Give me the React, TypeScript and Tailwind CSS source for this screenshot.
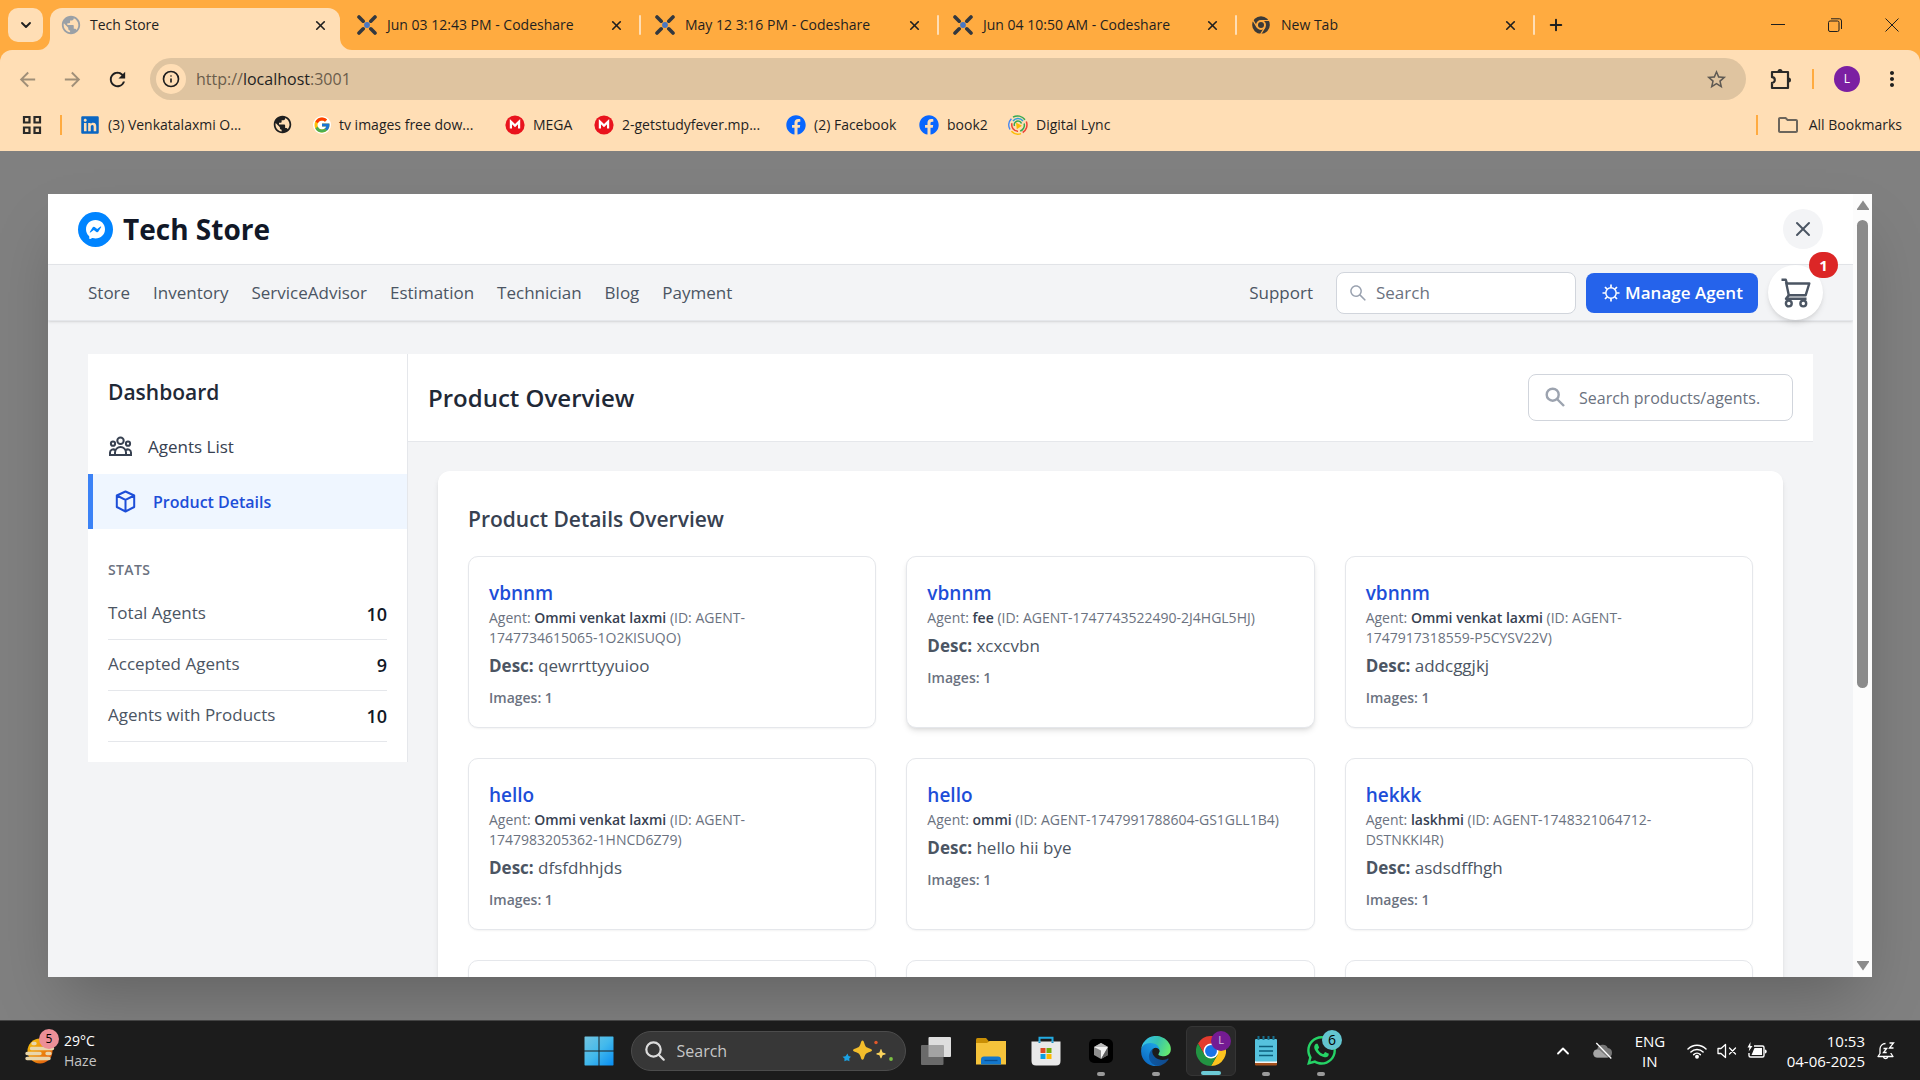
import React from "react";
import { AiOutlineSearch } from "react-icons/ai";
import { BsMessenger } from "react-icons/bs";
import { FaFacebook, FaLinkedin, FaWhatsapp } from "react-icons/fa";
import { FcGoogle } from "react-icons/fc";
import {
  MdArrowBack,
  MdArrowForward,
  MdMoreVert,
  MdOutlineFolder,
  MdPublic,
  MdRefresh,
  MdStarBorder,
} from "react-icons/md";
import { ChevronDown, ChevronUp, Info, Plus, X } from "lucide-react";

/* ---------- drawn icons ---------- */

function CodeshareIcon() {
  return (
    <svg viewBox="0 0 20 20" className="size-5 shrink-0" aria-hidden="true">
      <g stroke="#33383f" strokeWidth="3.6" strokeLinecap="round">
        <path d="M2 2l4.2 4.2M18 2l-4.2 4.2M2 18l4.2-4.2M18 18l-4.2-4.2" />
      </g>
      <circle cx="10" cy="10" r="2.9" fill="#4877c4" />
    </svg>
  );
}

function ChromeMono() {
  return (
    <svg viewBox="0 0 24 24" className="size-5 shrink-0" aria-hidden="true">
      <circle cx="12" cy="12" r="8.3" fill="none" stroke="#3b3a38" strokeWidth="4.6" />
      <circle cx="12" cy="12" r="3.6" fill="#3b3a38" />
      <path d="M12 6.6H22M7.2 14.6L2.4 6.4M16.8 14.6L11.6 23" stroke="#ffab40" strokeWidth="1.4" />
    </svg>
  );
}

function PuzzleIcon() {
  return (
    <svg viewBox="0 0 22 22" className="size-[22px]" aria-hidden="true">
      <path
        d="M2 4h16v16H2v-5.200a2.800 2.800 0 0 0 0-5.600z"
        fill="none"
        stroke="#2b2a28"
        strokeWidth="2.200"
        strokeLinejoin="round"
      />
      <path d="M7.500 3.500a2.500 2.500 0 0 1 5 0zM18.500 9.500a2.500 2.500 0 0 1 0 5z" fill="#2b2a28" />
    </svg>
  );
}

function MegaIcon() {
  return (
    <svg viewBox="0 0 20 20" className="size-5" aria-hidden="true">
      <circle cx="10" cy="10" r="9.6" fill="#e9131d" />
      <path d="M5.9 13.6V6.6L10 10.6l4.1-4v7" fill="none" stroke="#fff" strokeWidth="2.2" />
    </svg>
  );
}

function DigitalLyncIcon() {
  return (
    <svg viewBox="0 0 20 20" className="size-5" fill="none" strokeWidth="1.5" aria-hidden="true">
      <path d="M5 2.2a9 9 0 0 1 12 2.6" stroke="#35a853" />
      <path d="M18.3 6.5a9 9 0 0 1-3.6 11" stroke="#ea4335" />
      <path d="M13 18.6a9 9 0 0 1-9.600-2.300" stroke="#fbbc05" />
      <path d="M2 14.500A9 9 0 0 1 3.400 3.700" stroke="#4285f4" />
      <path d="M5 6a6.300 6.300 0 0 1 10 0" stroke="#2ea1d9" />
      <path d="M16.200 8.500a6.300 6.300 0 0 1-4 7.500" stroke="#35a853" />
      <path d="M10 16.300a6.300 6.300 0 0 1-6-8" stroke="#ea4335" />
      <path d="M6.500 11a3.700 3.700 0 0 1 7-2.500" stroke="#35a853" />
      <path d="M8 7.500l6 3.200-5.200 3.600z" fill="#fbbc05" />
    </svg>
  );
}

function GearIcon() {
  return (
    <svg viewBox="0 0 20 20" className="size-5" fill="none" stroke="currentColor" aria-hidden="true">
      <circle cx="10" cy="10" r="5.200" strokeWidth="1.500" />
      <path
        strokeWidth="1.700"
        d="M10 1.500v3M10 15.500v3M1.500 10h3M15.500 10h3M4 4l2.100 2.100M13.900 13.900L16 16M4 16l2.100-2.100M13.900 6.100L16 4"
      />
    </svg>
  );
}

function CartIcon() {
  return (
    <svg viewBox="0 0 30 30" className="size-[30px]" fill="none" stroke="currentColor" strokeWidth="2.400" strokeLinejoin="round" aria-hidden="true">
      <path d="M.5 1.800h4.300l1.200 3.700h22.300l-3.600 11.700H7.800L5 4" />
      <path d="M7.800 17.200L5 20.800h20.500" />
      <circle cx="7.800" cy="25.500" r="2.900" />
      <circle cx="22.300" cy="25.500" r="2.900" />
    </svg>
  );
}

function TeamIcon() {
  return (
    <svg viewBox="0 0 25 25" className="size-[25px]" fill="none" stroke="currentColor" strokeWidth="2" aria-hidden="true">
      <circle cx="12.500" cy="6.800" r="3.200" />
      <circle cx="5" cy="9.700" r="2.100" />
      <circle cx="20" cy="9.700" r="2.100" />
      <path d="M7 21v-2.500a5.500 5.500 0 0 1 11 0V21M2 21v-2.500a3.200 3.200 0 0 1 5.300-2.300M23 21v-2.500a3.200 3.200 0 0 0-5.300-2.300M1 21h23" />
    </svg>
  );
}

function BoxIcon() {
  return (
    <svg viewBox="0 0 25 25" className="size-[25px]" fill="none" stroke="currentColor" strokeWidth="2" strokeLinejoin="round" aria-hidden="true">
      <path d="M12.500 2.500l8.700 4v11.500l-8.700 4.500-8.700-4.500V6.500zM3.800 6.500l8.700 4.300 8.700-4.300M12.500 10.800v11.700" />
    </svg>
  );
}

function HazeIcon() {
  return (
    <svg viewBox="0 0 32 32" className="size-8" aria-hidden="true">
      <defs>
        <linearGradient id="haze" x1="0" y1="0" x2="1" y2="1">
          <stop offset="0" stopColor="#f7c80b" />
          <stop offset="1" stopColor="#e2520f" />
        </linearGradient>
      </defs>
      <circle cx="16" cy="16" r="12.500" fill="url(#haze)" />
      <g stroke="#e9d6ab" strokeWidth="3.400" strokeLinecap="round">
        <path d="M9 8.500h2M7.500 13.500h21M3 18.500h13M23 18.500h3M3 23.500h22" />
      </g>
    </svg>
  );
}

function WindowsIcon() {
  return (
    <svg viewBox="0 0 30 30" className="size-[30px]" aria-hidden="true">
      <defs>
        <linearGradient id="win" gradientUnits="userSpaceOnUse" x1="0" y1="0" x2="30" y2="30">
          <stop offset="0" stopColor="#74c5e0" />
          <stop offset="0.500" stopColor="#42b9ec" />
          <stop offset="1" stopColor="#068cf2" />
        </linearGradient>
      </defs>
      <path fill="url(#win)" d="M1 .5h13.500v14H.5V1zM15.500.5H29l.5.500v13.500h-14zM.5 15.500h14v14H1l-.5-.5zM15.500 15.500h14V29l-.5.500H15.500z" />
    </svg>
  );
}

function SparkleIcon() {
  return (
    <svg viewBox="0 0 52 24" className="h-6 w-[52px] shrink-0" aria-hidden="true">
      <path fill="#f3bd2b" d="M20.500 1.500c1 0 1.300 1 2 3.300.9 2.900 1.700 3.500 4.300 4.400 2.300.8 3.200 1.100 3.200 2s-.9 1.300-3.200 2c-2.600.9-3.400 1.700-4.300 4.400-.7 2.300-1 3.200-2 3.200s-1.300-.9-2-3.200c-.9-2.700-1.700-3.500-4.300-4.400-2.300-.7-3.200-1.100-3.200-2s.9-1.200 3.200-2c2.600-.9 3.400-1.500 4.300-4.400.7-2.300 1-3.300 2-3.300z" />
      <path fill="#fbd35c" d="M39 10c.7 0 1.200 3.200 1.600 3.600.4.400 3.100.6 3.100 1.300s-2.700 1-3.100 1.400c-.4.400-.9 3.300-1.600 3.300s-1.200-2.900-1.600-3.300c-.4-.4-3.100-.7-3.100-1.400s2.700-.9 3.100-1.300c.4-.4.900-3.600 1.600-3.600z" />
      <path fill="#1ba1e2" d="M5.500 14.500l1 2.500 2.500.8-1.800 1.700.3 2.700-2.500-1-2.600 1 .1-2.600L.5 17.800l3-.5z" />
      <circle cx="34" cy="3.500" r="1.700" fill="#e2582b" />
      <circle cx="49" cy="20" r="1.900" fill="#7cc142" />
    </svg>
  );
}

function TaskViewIcon() {
  return (
    <svg viewBox="0 0 30 30" className="size-[30px]" aria-hidden="true">
      <rect x="7.500" y="1" width="22.500" height="20" rx="1" fill="#dedede" />
      <rect x="0" y="9" width="22.500" height="20" rx="1" fill="#6a6a6a" />
      <rect x="7.500" y="9" width="15" height="12" fill="#a3a3a3" />
    </svg>
  );
}

function ExplorerIcon() {
  return (
    <svg viewBox="0 0 30 30" className="size-[30px]" aria-hidden="true">
      <path d="M0 3.500Q0 2 1.500 2h8.500L13 5.500V12H0z" fill="#c98f05" />
      <path d="M0 7h11l2.500-2H30v23.500H0z" fill="#f5c33b" />
      <path d="M5 28.500v-5q0-3 3-3h14q3 0 3 3v5z" fill="#1277cd" />
      <path d="M8.500 24.500h13" stroke="#0a4f92" strokeWidth="1.300" />
    </svg>
  );
}

function StoreIcon() {
  return (
    <svg viewBox="0 0 30 30" className="size-[30px]" aria-hidden="true">
      <path d="M8.500 7V1.700h13V7" fill="none" stroke="#23abe2" strokeWidth="2" />
      <path d="M.5 5.500h29V25q0 4.500-4.500 4.500H5Q.5 29.500.5 25z" fill="#e9e9e9" />
      <path d="M9.500 12h5v5h-5z" fill="#dc4a25" />
      <path d="M15.500 12h5v5h-5z" fill="#74ad0b" />
      <path d="M9.500 18h5v5h-5z" fill="#0b9fe3" />
      <path d="M15.500 18h5v5h-5z" fill="#fdb900" />
      <path d="M8.500 5.500v1.500M21.500 5.500v1.500" stroke="#1490c4" strokeWidth="2" />
    </svg>
  );
}

function CursorAppIcon() {
  return (
    <svg viewBox="0 0 30 30" className="size-[30px]" aria-hidden="true">
      <rect x="3" y="3" width="24" height="24" rx="5" fill="#000" />
      <path d="M15 7l7 4v8l-7 4-7-4v-8z" fill="#8d8d8d" />
      <path d="M8 11h14l-7 12v-8.500z" fill="#f1f1f1" />
      <path d="M15 7l7 4H8z" fill="#b9b9b9" />
      <path d="M22 11v8l-7 4z" fill="#5d5d5d" />
    </svg>
  );
}

function EdgeIcon() {
  return (
    <svg viewBox="4 1 258 258" className="size-[30px]" aria-hidden="true">
      <defs>
        <linearGradient id="edgeA" x1="0" y1="0.500" x2="1" y2="0.500">
          <stop offset="0" stopColor="#0c59a4" />
          <stop offset="1" stopColor="#114a8b" />
        </linearGradient>
        <linearGradient id="edgeB" x1="0.800" y1="0.200" x2="0.300" y2="1">
          <stop offset="0" stopColor="#1b9de2" />
          <stop offset="0.500" stopColor="#1482d3" />
          <stop offset="1" stopColor="#0a66c0" />
        </linearGradient>
        <linearGradient id="edgeC" x1="0" y1="0.300" x2="1" y2="0.600">
          <stop offset="0" stopColor="#35c1f1" />
          <stop offset="0.500" stopColor="#36c2b0" />
          <stop offset="1" stopColor="#66eb6e" />
        </linearGradient>
      </defs>
      <path fill="url(#edgeA)" d="M235.680 195.460a93.730 93.730 0 0 1-10.540 4.710 101.870 101.870 0 0 1-35.900 6.460c-47.320 0-88.540-32.550-88.540-74.320A31.480 31.480 0 0 1 117.130 104.880c-42.800 1.800-53.800 46.400-53.800 72.530 0 73.880 68.090 81.370 82.760 81.370 7.910 0 19.840-2.300 27-4.560l1.310-.44A128.340 128.340 0 0 0 241 201.100a4 4 0 0 0-5.320-5.640Z" />
      <path fill="url(#edgeB)" d="M110.730 246.340A79.210 79.210 0 0 1 88 225a80.720 80.720 0 0 1 29.130-120c3.120-1.470 8.450-4.130 15.540-4a32.350 32.350 0 0 1 25.690 13 31.880 31.880 0 0 1 6.360 18.660c0-.21 24.460-79.600-80-79.600-43.900 0-80 41.660-80 78.210a130.150 130.150 0 0 0 12.110 56 128 128 0 0 0 156.380 67.110 75.550 75.550 0 0 1-62.780-8Z" />
      <path fill="url(#edgeC)" d="M156.940 153.780c-.81 1.050-3.300 2.500-3.300 5.660 0 2.610 1.700 5.120 4.720 7.230 14.380 10 41.490 8.680 41.560 8.680a59.560 59.560 0 0 0 30.270-8.350 61.380 61.380 0 0 0 30.430-52.880c.26-22.410-8-37.310-11.340-43.910C228.090 28.760 182.350.2 132.610.2a128 128 0 0 0-128 126.200c.48-36.540 36.800-66.050 80-66.050 3.500 0 23.460.34 42 10.070 16.340 8.580 24.900 18.940 30.850 29.210 6.180 10.670 7.280 24.150 7.280 29.520 0 5.370-2.740 13.330-7.800 19.900Z" />
    </svg>
  );
}

function ChromeIcon() {
  return (
    <svg viewBox="0 0 48 48" className="size-[30px]" aria-hidden="true">
      <path d="M24 12h20.800A24 24 0 0 0 3.200 12l10.400 18z" fill="#e33b2e" />
      <path d="M34.400 30L24 48A24 24 0 0 0 44.800 12H24z" fill="#fcc31e" />
      <path d="M13.600 30L3.200 12A24 24 0 0 0 24 48l10.400-18z" fill="#229342" />
      <circle cx="24" cy="24" r="12" fill="#fff" />
      <circle cx="24" cy="24" r="9.500" fill="#1a73e8" />
    </svg>
  );
}

function NotepadIcon() {
  return (
    <svg viewBox="0 0 30 30" className="size-[30px]" aria-hidden="true">
      <rect x="4" y="25" width="22" height="4.500" rx="1" fill="#a5511d" />
      <rect x="4" y="24" width="22" height="3" fill="#f4f4f4" />
      <rect x="4" y="3" width="22" height="22.500" rx="1" fill="#56c2dd" />
      <path d="M8 10.500h14M8 15h14M8 19.500h14" stroke="#0c5f7d" strokeWidth="1.700" />
      <path d="M7.500 0v4M12.500 0v4M17.500 0v4M22.500 0v4" stroke="#17708e" strokeWidth="2" />
    </svg>
  );
}

function CloudOffIcon() {
  return (
    <svg viewBox="0 0 20 18" className="h-[18px] w-5" aria-hidden="true">
      <path d="M4.500 15.500a4 4 0 0 1-.3-8A5.600 5.600 0 0 1 14.800 6 4.800 4.800 0 0 1 15 15.500z" fill="#777" />
      <path d="M4.500 15.500a4 4 0 1 1 2-7.400L15 15.500z" fill="#a5a5a5" />
      <path d="M3.300 1l15 15.500" stroke="#fff" strokeWidth="1.300" />
    </svg>
  );
}

function WifiIcon() {
  return (
    <svg viewBox="0 0 20 16" className="h-4 w-5" fill="none" stroke="#fff" strokeWidth="1.500" strokeLinecap="round" aria-hidden="true">
      <path d="M1 6a12.600 12.600 0 0 1 18 0M3.900 9a8.500 8.500 0 0 1 12.200 0M6.700 11.600a4.700 4.700 0 0 1 6.600 0" />
      <circle cx="10" cy="13.700" r="1.200" fill="#fff" />
    </svg>
  );
}

function MutedIcon() {
  return (
    <svg viewBox="0 0 20 16" className="h-4 w-5" fill="none" stroke="#fff" strokeWidth="1.300" strokeLinejoin="round" aria-hidden="true">
      <path d="M1 5.500h3L8.500 1.500v13L4 10.500H1z" />
      <path d="M12.500 5l6 6M18.500 5l-6 6" strokeLinecap="round" />
    </svg>
  );
}

function BatteryIcon() {
  return (
    <svg viewBox="0 0 20 18" className="h-[18px] w-5" aria-hidden="true">
      <path d="M7 4h8.500Q17 4 17 5.500v8q0 1.500-1.500 1.500h-12Q2 15 2 13.500V11" fill="none" stroke="#fff" strokeWidth="1.400" />
      <path d="M7.500 6H15v7H4.500z" fill="#fff" />
      <path d="M18 7.500q1.700 0 1.700 2t-1.700 2z" fill="#fff" />
      <path d="M3.500 0L.5 5.500h2l-.8 4L5.500 4H3.300z" fill="#fff" />
    </svg>
  );
}

function BellSnoozeIcon() {
  return (
    <svg viewBox="0 0 20 20" className="size-5" fill="none" stroke="#fff" strokeWidth="1.300" aria-hidden="true">
      <path d="M9.500 2.500A5.500 5.500 0 0 0 4 8v4.500l-2 3h15l-2-3v-.5" strokeLinejoin="round" />
      <path d="M7.500 16a2.200 2.200 0 0 0 4.200 0" />
      <path d="M7.500 7.500h3.200l-3.200 4h3.200M13.500 2h4l-4 5h4" />
    </svg>
  );
}

/* ---------- browser frame ---------- */

const inactiveTabs = [
  { title: "Jun 03 12:43 PM - Codeshare", icon: <CodeshareIcon /> },
  { title: "May 12 3:16 PM - Codeshare", icon: <CodeshareIcon /> },
  { title: "Jun 04 10:50 AM - Codeshare", icon: <CodeshareIcon /> },
  { title: "New Tab", icon: <ChromeMono /> },
];

function TabStrip() {
  return (
    <div className="flex h-[50px] items-stretch bg-[#ffab40] pl-2">
      <button aria-label="Search tabs" className="mt-2 flex h-[34px] w-[35px] items-center justify-center rounded-[10px] bg-[#ffdeb5]">
        <ChevronDown className="size-4" strokeWidth={2.8} />
      </button>
      <div className="relative mt-2 ml-[7px] flex w-[290px] items-center rounded-t-xl bg-[#ffdeb5] pb-2 pl-[10px]">
        <svg viewBox="0 0 12 12" className="absolute bottom-0 -left-3 size-3" fill="#ffdeb5" aria-hidden="true">
          <path d="M12 0v12H0A12 12 0 0 0 12 0z" />
        </svg>
        <svg viewBox="0 0 12 12" className="absolute -right-3 bottom-0 size-3" fill="#ffdeb5" aria-hidden="true">
          <path d="M0 0v12h12A12 12 0 0 1 0 0z" />
        </svg>
        <MdPublic className="size-[22px] text-[#9aa0a6]" />
        <span className="ml-2 flex-1 text-sm">Tech Store</span>
        <button aria-label="Close tab" className="mr-[11px] flex size-[18px] items-center justify-center">
          <X className="size-[15px]" strokeWidth={2.6} />
        </button>
      </div>
      <div className="ml-[3px] flex">
        {inactiveTabs.map((tab) => (
          <div key={tab.title} className="flex w-[298px] items-center pl-[14px]">
            {tab.icon}
            <span className="ml-[10px] flex-1 text-sm">{tab.title}</span>
            <button aria-label="Close tab" className="mr-[14px] flex size-[18px] items-center justify-center">
              <X className="size-[15px]" strokeWidth={2.6} />
            </button>
            <span className="h-5 w-[2px] rounded bg-[#ffdeb5]" />
          </div>
        ))}
      </div>
      <button aria-label="New tab" className="ml-[11px] flex w-5 items-center justify-center">
        <Plus className="size-[18px]" strokeWidth={2.6} />
      </button>
      <div className="ml-auto flex">
        <button aria-label="Minimize" className="flex w-[57px] items-center justify-center">
          <svg viewBox="0 0 14 14" className="size-[14px]" stroke="#1f1f1f"><path d="M0 6.500h14" /></svg>
        </button>
        <button aria-label="Restore" className="flex w-[57px] items-center justify-center">
          <svg viewBox="0 0 14 14" className="size-[14px]" stroke="#1f1f1f" fill="none">
            <rect x=".5" y="3" width="10.500" height="10.500" rx="1.500" />
            <path d="M3 .8h8.500Q13.500.8 13.500 3v8" />
          </svg>
        </button>
        <button aria-label="Close window" className="flex w-[57px] items-center justify-center">
          <svg viewBox="0 0 14 14" className="size-[14px]" stroke="#1f1f1f"><path d="M.5.500l13 13M13.500.500l-13 13" /></svg>
        </button>
      </div>
    </div>
  );
}

function Toolbar() {
  return (
    <div className="flex h-[58px] items-center rounded-t-xl bg-[#ffdeb5] px-4">
      <button aria-label="Back" className="mr-[22px] text-[#a08f78]"><MdArrowBack className="size-[23px]" /></button>
      <button aria-label="Forward" className="mr-[22px] text-[#a08f78]"><MdArrowForward className="size-[23px]" /></button>
      <button aria-label="Reload" className="mr-[21px]"><MdRefresh className="size-[23px]" /></button>
      <div className="flex h-[42px] flex-1 items-center rounded-full bg-[#dfc4a0] pr-[18px] pl-[6px]">
        <button aria-label="Site information" className="flex size-[30px] items-center justify-center rounded-full bg-[#ffdeb5]">
          <Info className="size-[18px]" strokeWidth={2.2} />
        </button>
        <div role="textbox" aria-label="Address" className="ml-[10px] flex-1 text-base text-[#6b5d4b]">
          http://<span className="text-[#1f1f1f]">localhost</span>:3001
        </div>
        <button aria-label="Bookmark this page" className="text-[#5f5a53]"><MdStarBorder className="size-[23px]" /></button>
      </div>
      <button aria-label="Extensions" className="ml-6"><PuzzleIcon /></button>
      <span className="ml-5 h-5 w-[2px] bg-[#ffab40]" />
      <button aria-label="Profile" className="ml-5 flex size-[26px] items-center justify-center rounded-full bg-[#7b1fa2] text-xs text-white">L</button>
      <button aria-label="Menu" className="ml-5"><MdMoreVert className="size-6" /></button>
    </div>
  );
}

const bookmarks = [
  { label: "(3) Venkatalaxmi O...", width: "w-[192px]", icon: <FaLinkedin className="size-5 text-[#0a66c2]" /> },
  { label: "", width: "w-[41px]", icon: <MdPublic className="size-[21px] text-[#1f1f1f]" /> },
  { label: "tv images free dow...", width: "w-[192px]", icon: <span className="rounded-full bg-white"><FcGoogle className="size-[18px]" /></span> },
  { label: "MEGA", width: "w-[89px]", icon: <MegaIcon /> },
  { label: "2-getstudyfever.mp...", width: "w-[192px]", icon: <MegaIcon /> },
  { label: "(2) Facebook", width: "w-[133px]", icon: <FaFacebook className="size-5 text-[#0866ff]" /> },
  { label: "book2", width: "w-[89px]", icon: <FaFacebook className="size-5 text-[#0866ff]" /> },
  { label: "Digital Lync", width: "w-[120px]", icon: <DigitalLyncIcon /> },
];

function BookmarksBar() {
  return (
    <div className="flex h-[43px] items-center bg-[#ffdeb5] pr-[18px] pb-[10px] pl-[22px] text-sm">
      <button aria-label="Apps">
        <svg viewBox="0 0 20 20" className="size-5" fill="none" stroke="#2b2a28" strokeWidth="2.200">
          <path d="M2 2h5.500v5.500H2zM12.500 2H18v5.500h-5.500zM2 12.500h5.500V18H2zM12.500 12.500H18V18h-5.500z" />
        </svg>
      </button>
      <span className="mx-[18px] h-5 w-[2px] bg-[#ffab40]" />
      {bookmarks.map((b, i) => (
        <a key={i} href="#" aria-label={b.label || "Bookmark"} className={`${b.width} flex shrink-0 items-center gap-2 whitespace-nowrap`}>
          {b.icon}
          {b.label}
        </a>
      ))}
      <span className="ml-auto h-5 w-[2px] bg-[#ffab40]" />
      <button className="ml-[18px] flex items-center gap-[9px] whitespace-nowrap">
        <MdOutlineFolder className="size-6 text-[#6b655c]" />
        All Bookmarks
      </button>
    </div>
  );
}

/* ---------- store page ---------- */

const navLinks = ["Store", "Inventory", "ServiceAdvisor", "Estimation", "Technician", "Blog", "Payment"];

const stats = [
  { label: "Total Agents", value: 10 },
  { label: "Accepted Agents", value: 9 },
  { label: "Agents with Products", value: 10 },
];

const products = [
  { name: "vbnnm", agent: "Ommi venkat laxmi", id: "AGENT-1747734615065-1O2KISUQO", desc: "qewrrttyyuioo", raised: false },
  { name: "vbnnm", agent: "fee", id: "AGENT-1747743522490-2J4HGL5HJ", desc: "xcxcvbn", raised: true },
  { name: "vbnnm", agent: "Ommi venkat laxmi", id: "AGENT-1747917318559-P5CYSV22V", desc: "addcggjkj", raised: false },
  { name: "hello", agent: "Ommi venkat laxmi", id: "AGENT-1747983205362-1HNCD6Z79", desc: "dfsfdhhjds", raised: false },
  { name: "hello", agent: "ommi", id: "AGENT-1747991788604-GS1GLL1B4", desc: "hello hii bye", raised: false },
  { name: "hekkk", agent: "laskhmi", id: "AGENT-1748321064712-DSTNKKI4R", desc: "asdsdffhgh", raised: false },
];

function StoreHeader() {
  return (
    <header className="flex items-center border-b border-gray-200 bg-white px-[30px] py-[15px]">
      <span className="flex size-[35px] items-center justify-center rounded-full bg-[#0084ff] text-white">
        <BsMessenger className="size-[19px]" />
      </span>
      <h1 className="ml-[10px] flex-1 text-[28px] leading-10 font-bold text-[#111827]">Tech Store</h1>
      <button aria-label="Close" className="flex size-10 items-center justify-center rounded-full bg-gray-100 text-[#4b5563]">
        <X className="size-6" strokeWidth={2} />
      </button>
    </header>
  );
}

function StoreNav() {
  return (
    <nav className="flex h-14 items-center border-b border-gray-200 bg-gray-100 pr-[30px] pl-10 text-[17px] font-medium text-[#4b5563] shadow-sm">
      <div className="flex flex-1 gap-[23px]">
        {navLinks.map((l) => (
          <a key={l} href="#">{l}</a>
        ))}
      </div>
      <a href="#">Support</a>
      <div className="relative ml-[23px]">
        <AiOutlineSearch className="absolute top-[11px] left-3 size-5 text-gray-400" />
        <input
          aria-label="Search"
          placeholder="Search"
          className="h-[42px] w-60 rounded-lg border border-gray-300 bg-white pr-3 pl-[39px] font-normal placeholder:text-[#6b7280]"
        />
      </div>
      <button className="ml-[10px] flex h-10 w-[172px] items-center justify-center gap-1 rounded-lg bg-[#2563eb] font-semibold whitespace-nowrap text-white">
        <GearIcon />
        Manage Agent
      </button>
      <button aria-label="Cart" className="relative ml-[10px] flex size-[55px] items-center justify-center rounded-full bg-white text-[#4b5563] shadow-md">
        <CartIcon />
        <span className="absolute -top-[13px] -right-[15px] flex h-[26px] w-[29px] items-center justify-center rounded-full bg-[#dc2626] text-[15px] font-bold text-white">
          1
        </span>
      </button>
    </nav>
  );
}

function Sidebar() {
  return (
    <aside className="w-80 shrink-0 self-start border-r border-gray-200 bg-white pt-[21px]">
      <h2 className="mb-[9px] px-5 text-[21px] leading-[35px] font-semibold text-[#1f2937]">Dashboard</h2>
      <a href="#" className="flex h-[55px] items-center gap-[15px] px-5 text-[17px] text-[#374151]">
        <TeamIcon />
        Agents List
      </a>
      <a href="#" className="flex h-[55px] items-center gap-[15px] border-l-[5px] border-[#3b82f6] bg-[#eff6ff] px-5 text-base font-semibold text-[#1d4ed8]">
        <BoxIcon />
        Product Details
      </a>
      <div className="px-5 pt-[31px] pb-5">
        <h3 className="mb-[9px] text-sm leading-5 font-semibold tracking-wide text-[#6b7280]">STATS</h3>
        {stats.map((s) => (
          <div key={s.label} className="flex h-[51px] items-center justify-between border-b border-gray-200">
            <span className="pb-[2px] text-[17px] text-[#4b5563]">{s.label}</span>
            <span className="text-lg font-semibold text-[#111827]">{s.value}</span>
          </div>
        ))}
      </div>
    </aside>
  );
}

function ProductCard({ product }: { product: (typeof products)[number] }) {
  return (
    <article className={`rounded-[10px] border border-gray-200 bg-white px-5 pt-[21px] pb-[19px] ${product.raised ? "shadow-md" : "shadow-xs"}`}>
      <h4 className="text-[19px] leading-[30px] font-semibold text-[#1d4ed8]">{product.name}</h4>
      <p className="pr-2 text-sm leading-5 text-[#6b7280]">
        Agent: <span className="font-semibold text-[#374151]">{product.agent}</span> (ID: {product.id})
      </p>
      <p className="mt-1 text-[17px] leading-7 text-[#4b5563]">
        <strong className="font-bold">Desc:</strong> {product.desc}
      </p>
      <p className="mt-2 text-sm leading-5 font-semibold text-[#6b7280]">Images: 1</p>
    </article>
  );
}

function ProductOverview() {
  return (
    <main className="min-w-0 flex-1">
      <div className="flex items-center justify-between border-b border-gray-200 bg-white p-5">
        <h2 className="text-2xl leading-9 font-semibold text-[#1f2937]">Product Overview</h2>
        <div className="relative">
          <svg viewBox="0 0 20 20" className="absolute top-[13px] left-[17px] size-5 text-[#9ca3af]" fill="none" stroke="currentColor" strokeWidth="2.400" aria-hidden="true">
            <circle cx="7.700" cy="7.700" r="6" />
            <path d="M12 12l7 7" />
          </svg>
          <input
            aria-label="Search products or agents"
            placeholder="Search products/agents..."
            className="h-[47px] w-[265px] rounded-lg border border-gray-300 bg-white pr-8 pl-[50px] text-base placeholder:text-[#6b7280]"
          />
        </div>
      </div>
      <div className="px-[30px] pt-[29px] pb-[30px]">
        <section className="rounded-xl bg-white px-[30px] pt-[31px] pb-[30px] shadow-md">
          <h3 className="mb-[19px] text-[21px] leading-[35px] font-semibold text-[#374151]">Product Details Overview</h3>
          <div className="grid grid-cols-3 gap-[30px]">
            {products.map((p) => (
              <ProductCard key={p.id} product={p} />
            ))}
            {[0, 1, 2].map((n) => (
              <div key={n} className="h-[172px] rounded-[10px] border border-gray-200 shadow-xs" />
            ))}
          </div>
        </section>
      </div>
    </main>
  );
}

function Scrollbar() {
  return (
    <div className="flex w-[19px] shrink-0 flex-col items-center bg-[#fcfcfc] py-[5px]">
      <svg viewBox="0 0 14 12" className="h-3 w-[14px]" fill="#8b8b8b"><path d="M7 1.500L13 10v1H1v-1z" /></svg>
      <div className="flex w-full flex-1 flex-col items-center py-[9px]">
        <div className="h-[64%] w-[11px] rounded-full bg-[#8b8b8b]" />
      </div>
      <svg viewBox="0 0 14 12" className="h-3 w-[14px]" fill="#8b8b8b"><path d="M7 10.500L1 2V1h12v1z" /></svg>
    </div>
  );
}

/* ---------- taskbar ---------- */

const apps = [
  { name: "Task view", icon: <TaskViewIcon />, running: false, active: false, badge: null },
  { name: "File Explorer", icon: <ExplorerIcon />, running: false, active: false, badge: null },
  { name: "Microsoft Store", icon: <StoreIcon />, running: false, active: false, badge: null },
  { name: "Cursor", icon: <CursorAppIcon />, running: true, active: false, badge: null },
  { name: "Microsoft Edge", icon: <EdgeIcon />, running: true, active: false, badge: null },
  { name: "Google Chrome", icon: <ChromeIcon />, running: true, active: true, badge: "L" },
  { name: "Notepad", icon: <NotepadIcon />, running: true, active: false, badge: null },
  { name: "WhatsApp", icon: <FaWhatsapp className="size-[33px] text-[#25d366]" />, running: true, active: false, badge: "6" },
];

function Taskbar() {
  return (
    <footer className="grid h-[60px] shrink-0 grid-cols-[1fr_auto_1fr] items-center border-t border-[#444] bg-[#1c1c1c] text-white">
      <button className="relative flex items-center gap-2 pl-6 text-left">
        <HazeIcon />
        <span className="absolute -top-[2px] left-[39px] flex size-5 items-center justify-center rounded-full bg-[#ec8f97] text-xs text-black">5</span>
        <span className="flex flex-col text-sm leading-5">
          <span>29°C</span>
          <span className="text-[#c4c4c4]">Haze</span>
        </span>
      </button>
      <div className="flex items-center">
        <button aria-label="Start" className="flex w-[55px] justify-center"><WindowsIcon /></button>
        <div className="mr-[3px] ml-1 flex h-10 w-[275px] items-center rounded-full border border-[#4c4c4c] bg-[#373737] pr-[11px] pl-[13px]">
          <svg viewBox="0 0 20 20" className="size-5 shrink-0" fill="none" stroke="#dcdcdc" strokeWidth="2.200" aria-hidden="true">
            <circle cx="8.500" cy="8.500" r="7.200" />
            <path d="M13.700 13.700l5 5" strokeLinecap="round" />
          </svg>
          <input aria-label="Search Windows" placeholder="Search" className="ml-3 min-w-0 flex-1 bg-transparent text-base placeholder:text-[#c6c6c6]" />
          <SparkleIcon />
        </div>
        {apps.map((a) => (
          <div key={a.name} className="flex w-[55px] justify-center">
            <button
              aria-label={a.name}
              className={`relative flex size-[50px] items-center justify-center rounded-md ${a.active ? "border border-[#353535] bg-[#292929]" : ""}`}
            >
              {a.icon}
              {a.badge === "L" && (
                <span className="absolute top-1 right-1 flex size-5 items-center justify-center rounded-full bg-[#741b93] text-[11px] text-[#d9c2e2]">L</span>
              )}
              {a.badge === "6" && (
                <span className="absolute top-1 right-1 flex size-5 items-center justify-center rounded-full bg-[#63c5d0] text-sm text-black">6</span>
              )}
              {a.running && (
                <span className={`absolute bottom-0 h-1 rounded-full ${a.active ? "w-5 bg-[#6ccbd6]" : "w-2 bg-[#9a9a9a]"}`} />
              )}
            </button>
          </div>
        ))}
      </div>
      <div className="flex items-center justify-end pr-6 text-[15px] leading-5">
        <button aria-label="Show hidden icons"><ChevronUp className="size-5" strokeWidth={2.2} /></button>
        <span className="ml-5"><CloudOffIcon /></span>
        <button className="ml-[22px] w-[30px] text-center">ENG<br />IN</button>
        <span className="ml-[22px]"><WifiIcon /></span>
        <span className="ml-[10px]"><MutedIcon /></span>
        <span className="ml-[10px]"><BatteryIcon /></span>
        <button className="ml-5 text-right">10:53<br />04-06-2025</button>
        <span className="ml-[11px]"><BellSnoozeIcon /></span>
      </div>
    </footer>
  );
}

export default function App() {
  return (
    <div className="flex h-screen flex-col overflow-hidden font-['Open_Sans','Noto_Sans',sans-serif] text-[#1f1f1f]">
      <div className="shrink-0 bg-[#ffab40]">
        <TabStrip />
        <Toolbar />
        <BookmarksBar />
      </div>
      <div className="flex min-h-0 flex-1 bg-[#808080] px-12 py-[43px]">
        <div className="flex min-w-0 flex-1 bg-gray-100 shadow-[0_31px_62px_-15px_rgba(0,0,0,0.25)]">
          <div className="min-w-0 flex-1 overflow-hidden">
            <StoreHeader />
            <StoreNav />
            <div className="flex px-10 pt-[33px]">
              <Sidebar />
              <ProductOverview />
            </div>
          </div>
          <Scrollbar />
        </div>
      </div>
      <Taskbar />
    </div>
  );
}
